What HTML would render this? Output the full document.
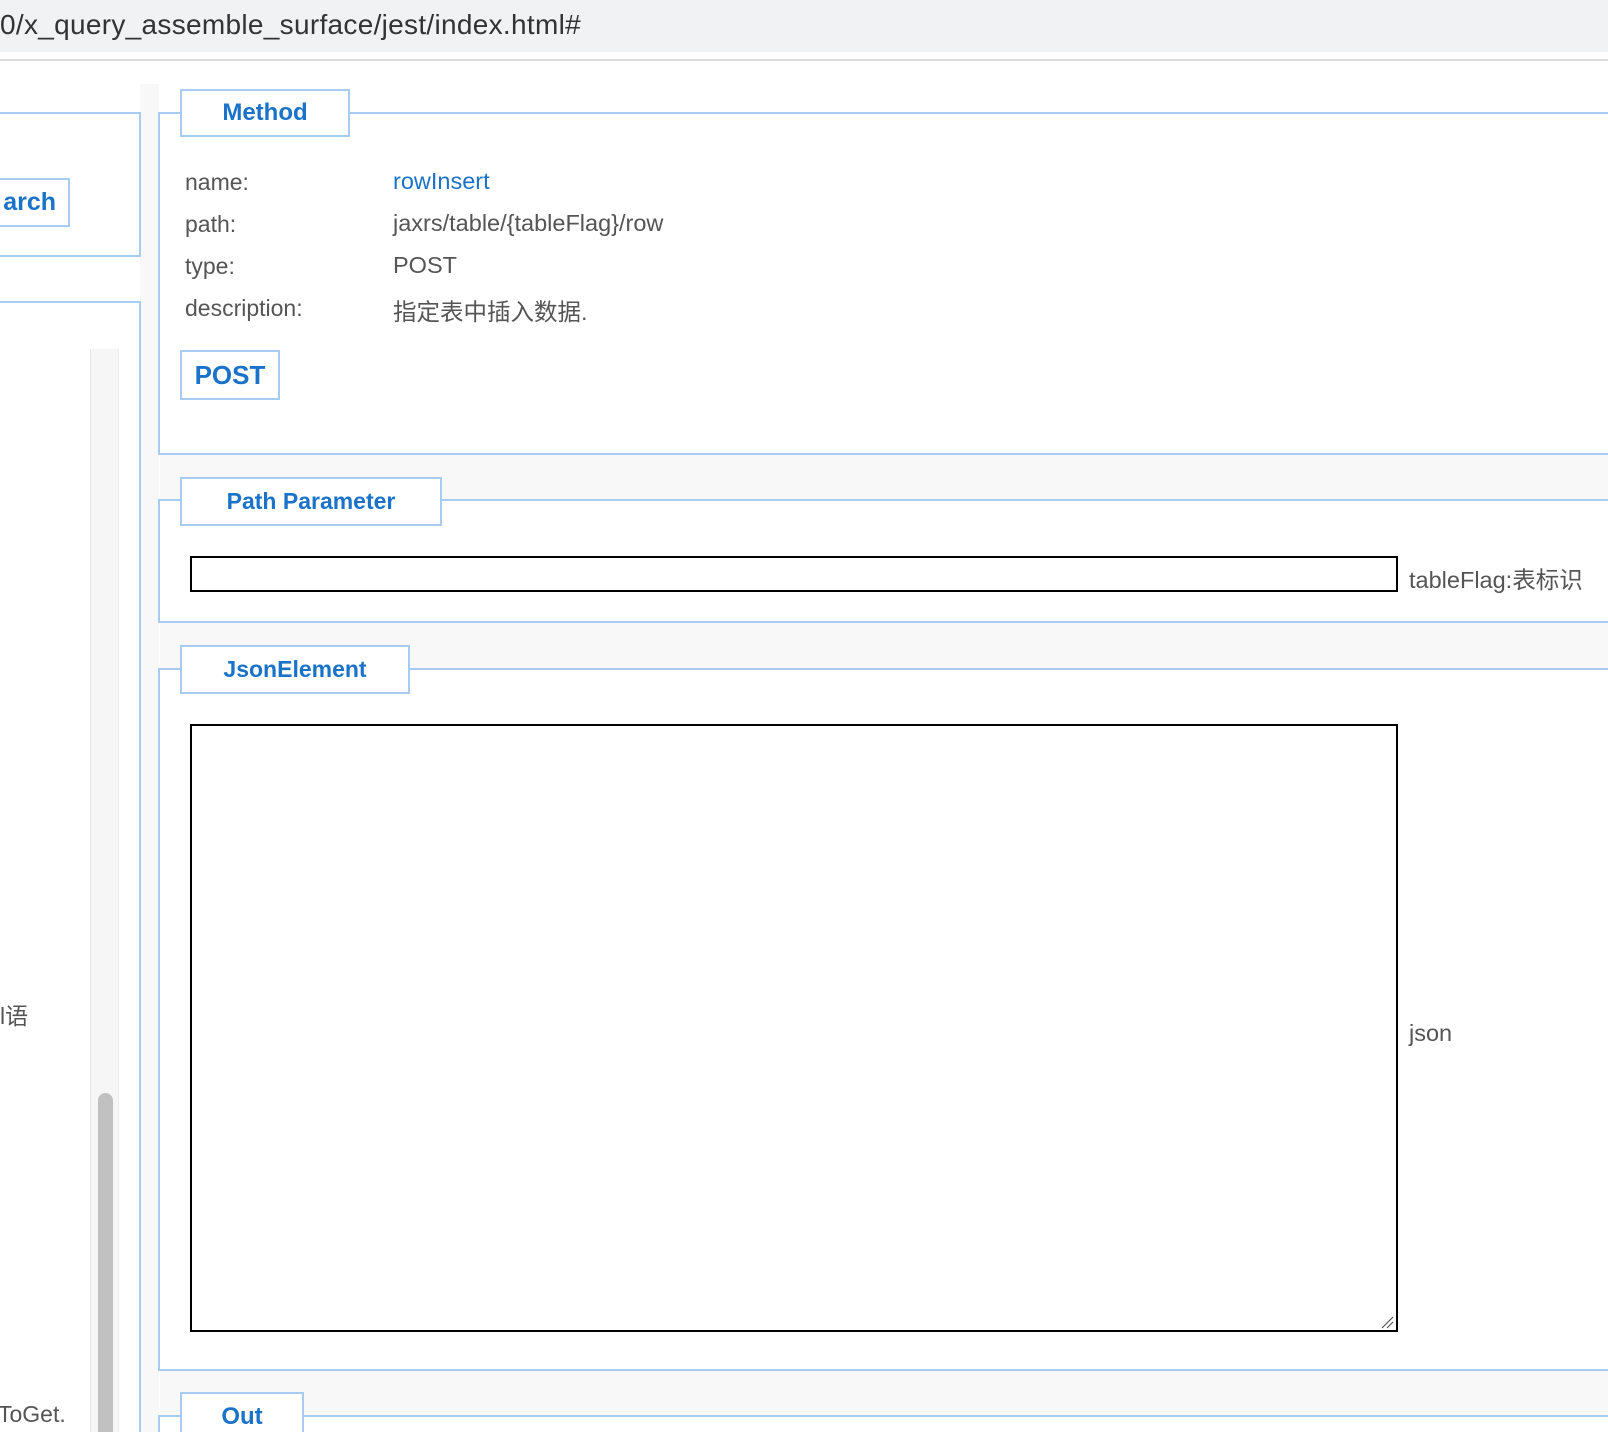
<!DOCTYPE html>
<html style="overflow:hidden;height:1432px"><head><meta charset="utf-8"><style>
*{margin:0;padding:0;box-sizing:border-box}
body{width:1608px;height:1432px;overflow:hidden;background:#fff;font-family:"Liberation Sans","Noto Sans CJK SC",sans-serif;position:relative;color:#555}
#w{position:absolute;left:0;top:0;width:1608px;height:1432px;overflow:hidden}
.a{position:absolute}
.url{left:0;top:0;width:1608px;height:52px;background:#f1f2f4;font-size:28px;color:#333;line-height:50px;letter-spacing:0.3px}
.sep{left:0;top:59px;width:1608px;height:2px;background:#dcdcdc}
.gap{background:#f8f8f8}
.bl{border:2px solid #a6cdf1}
.leg{background:#fff;border:2px solid #a6cdf1;color:#1a73c9;font-weight:bold;font-size:23px;text-align:center}
.lbl{font-size:23px;color:#555}
.val{font-size:23.5px;color:#555}
</style></head><body><div id="w">
<div class="a url">0/x_query_assemble_surface/jest/index.html#</div>
<div class="a sep"></div>
<div class="a gap" style="left:140px;top:84px;width:19px;height:1400px"></div>
<div class="a bl" style="left:-4px;top:112px;width:145px;height:145px;border-left:none"></div>
<div class="a leg" style="left:-4px;top:178px;width:74px;height:49px;font-size:25px;line-height:44px;text-align:right;padding-right:12px;border-left:none">arch</div>
<div class="a bl" style="left:-4px;top:301px;width:145px;height:1200px;border-left:none;border-bottom:none"></div>
<div class="a" style="left:90px;top:349px;width:29px;height:1150px;background:#f6f6f6;border-left:1px solid #e6e6e6;border-right:1px solid #ececec"></div>
<div class="a" style="left:98px;top:1093px;width:15px;height:400px;background:#c1c1c1;border-radius:8px"></div>
<div class="a lbl" style="left:0;top:997px">l语</div>
<div class="a lbl" style="left:-2px;top:1401px">ToGet.</div>
<div class="a bl" style="left:158px;top:112px;width:1460px;height:343px;border-right:none"></div>
<div class="a leg" style="left:180px;top:89px;width:170px;height:48px;line-height:44px;font-size:24px">Method</div>
<div class="a lbl" style="left:185px;top:169px">name:</div>
<div class="a val" style="left:393px;top:168px;color:#1a73c9">rowInsert</div>
<div class="a lbl" style="left:185px;top:211px">path:</div>
<div class="a val" style="left:393px;top:210px">jaxrs/table/{tableFlag}/row</div>
<div class="a lbl" style="left:185px;top:253px">type:</div>
<div class="a val" style="left:393px;top:252px">POST</div>
<div class="a lbl" style="left:185px;top:295px">description:</div>
<div class="a val" style="left:393px;top:293px">指定表中插入数据.</div>
<div class="a leg" style="left:180px;top:350px;width:100px;height:50px;line-height:46px;font-size:26px">POST</div>
<div class="a gap" style="left:160px;top:455px;width:1448px;height:44px"></div>
<div class="a bl" style="left:158px;top:499px;width:1460px;height:124px;border-right:none"></div>
<div class="a leg" style="left:180px;top:477px;width:262px;height:49px;line-height:45px">Path Parameter</div>
<div class="a" style="left:190px;top:556px;width:1208px;height:36px;border:2px solid #000;background:#fff"></div>
<div class="a val" style="left:1409px;top:561px">tableFlag:表标识</div>
<div class="a gap" style="left:160px;top:623px;width:1448px;height:45px"></div>
<div class="a bl" style="left:158px;top:668px;width:1460px;height:703px;border-right:none"></div>
<div class="a leg" style="left:180px;top:645px;width:230px;height:49px;line-height:45px">JsonElement</div>
<div class="a" style="left:190px;top:724px;width:1208px;height:608px;border:2px solid #000;background:#fff"></div>
<svg class="a" style="left:1379px;top:1314px" width="16" height="16"><path d="M3 14L14 3M8 14L14 8" stroke="#555" stroke-width="1.2"/></svg>
<div class="a val" style="left:1409px;top:1020px">json</div>
<div class="a gap" style="left:160px;top:1371px;width:1448px;height:45px"></div>
<div class="a bl" style="left:158px;top:1415px;width:1460px;height:60px;border-right:none"></div>
<div class="a leg" style="left:180px;top:1392px;width:124px;height:60px;line-height:45px;font-size:24px">Out</div>
</div></body></html>
